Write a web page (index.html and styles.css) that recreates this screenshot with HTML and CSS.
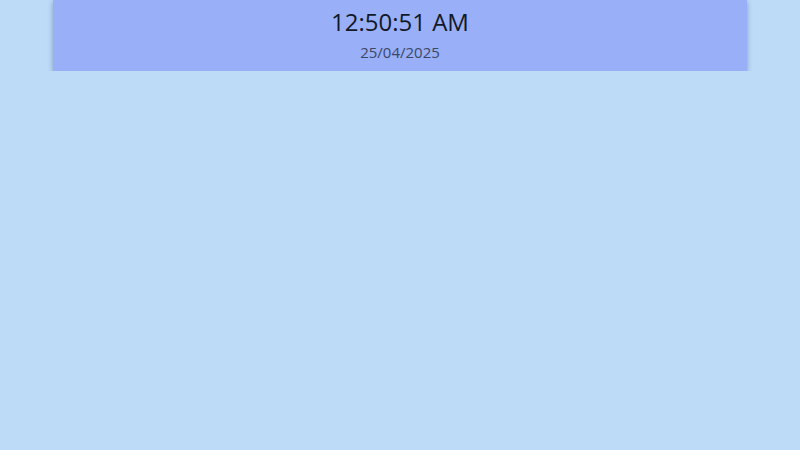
FILE: index.html
```html
<!DOCTYPE html>
<html lang="en">

<head>
    <meta charset="UTF-8">
    <meta name="viewport" content="width=device-width, initial-scale=1.0">
    <title>Clock</title>
    <link rel="stylesheet" href="styles.css">
</head>

<body>
    <div class="clock-card">
        <div class="clock-time">12:50:51 AM</div>
        <div class="clock-date">25/04/2025</div>
    </div>
</body>

</html>
```

FILE: styles.css
```css
body {
    font-family: 'Open Sans', 'Noto Sans', sans-serif;
    background-color: #bddbf7;
    margin: 0;
    padding: 0;
}

.clock-card {
    margin: 0 53px;
    height: 71px;
    background-color: #99aff8;
    box-shadow: 0 2px 5px rgba(40, 60, 120, 0.4);
    display: flex;
    flex-direction: column;
    align-items: center;
    padding-top: 4px;
    box-sizing: border-box;
}

.clock-time {
    font-size: 24px;
    color: #111827;
    line-height: 36px;
}

.clock-date {
    font-size: 15px;
    color: #3b4764;
    line-height: 20px;
    margin-top: 2px;
}
```
